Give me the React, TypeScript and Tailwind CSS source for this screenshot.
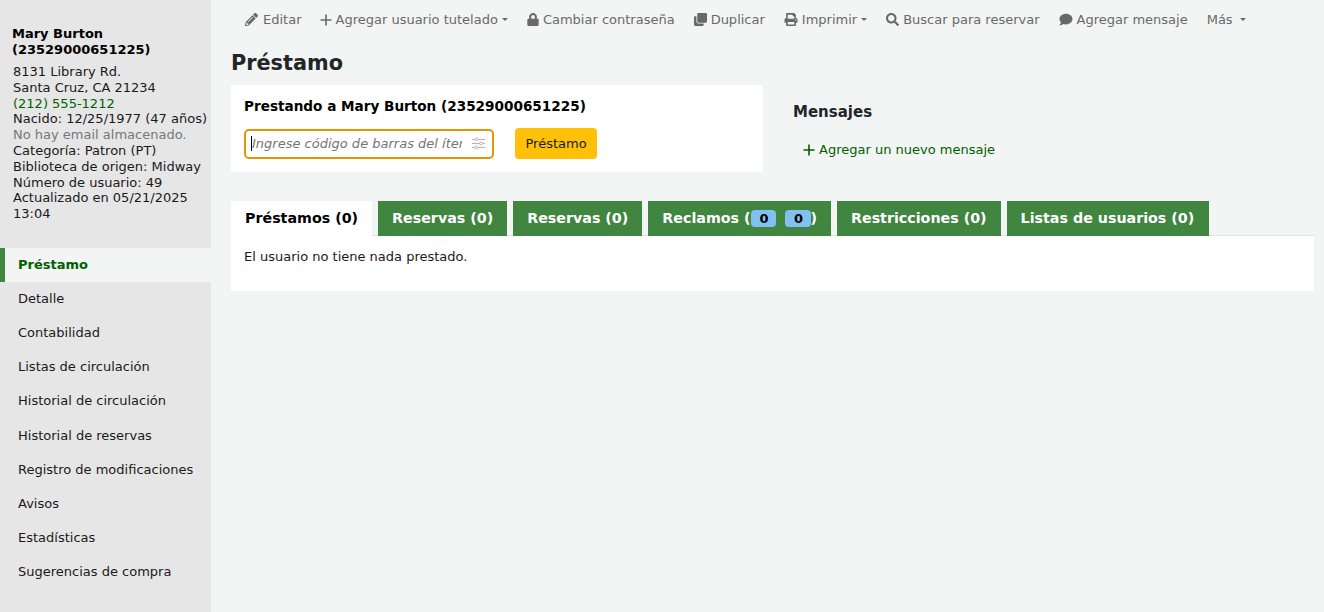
import { FaPencilAlt, FaLock, FaClone, FaPrint, FaSearch, FaComment } from "react-icons/fa";

const Caret = () => <span className="inline-block w-0 h-0 border-x-[3px] border-x-transparent border-t-[3px] border-t-[#696969] align-middle" />;

const ThinPlus = ({ color = "#696969" }: { color?: string }) => (
  <svg width="12" height="12" viewBox="0 0 12 12" fill="none" stroke={color} strokeWidth="1.6">
    <path d="M6 0.5V11.5M0.5 6H11.5" />
  </svg>
);

const toolbar = [
  { icon: <FaPencilAlt className="w-[13px] h-[13px]" />, label: "Editar", w: "ml-[245px]", gap: "gap-[5px]" },
  { icon: <ThinPlus />, label: "Agregar usuario tutelado", caret: true, w: "ml-[18px]", gap: "gap-[4px]" },
  { icon: <FaLock className="w-[12px] h-[13px]" />, label: "Cambiar contraseña", w: "ml-[19px]", gap: "gap-[4px]" },
  { icon: <FaClone className="w-[13px] h-[13px]" />, label: "Duplicar", w: "ml-[19px]", gap: "gap-[4px]" },
  { icon: <FaPrint className="w-[14px] h-[13px]" />, label: "Imprimir", caret: true, w: "ml-[19px]", gap: "gap-[4px]" },
  { icon: <FaSearch className="w-[13px] h-[13px]" />, label: "Buscar para reservar", w: "ml-[19px]", gap: "gap-[4px]" },
  { icon: <FaComment className="w-[14px] h-[13px]" />, label: "Agregar mensaje", w: "ml-[19px]", gap: "gap-[4px]" },
];

const nav = ["Detalle", "Contabilidad", "Listas de circulación", "Historial de circulación", "Historial de reservas", "Registro de modificaciones", "Avisos", "Estadísticas", "Sugerencias de compra"];

const Tab = ({ children, pr = "pr-[14px]" }: { children: React.ReactNode; pr?: string }) => (
  <div className={`ml-[6px] h-[35px] pl-[14px] ${pr} bg-[#408540] text-white font-bold text-[14.25px] flex items-center whitespace-nowrap`}>{children}</div>
);

export default function App() {
  return (
    <div className="flex min-h-[612px] bg-[#f3f4f4] text-[13px] text-[#000] font-['DejaVu_Sans',sans-serif]">
      <aside className="w-[211px] shrink-0 bg-[#e6e6e6] pt-[26px]">
        <div className="pl-[12px] font-bold leading-[16px]">Mary Burton<br />(23529000651225)</div>
        <div className="pl-[13px] pt-[6px] pb-[0.5px] leading-[15.8px] text-[#1a1a1a] whitespace-nowrap">
          <div>8131 Library Rd.</div>
          <div>Santa Cruz, CA 21234</div>
          <div className="text-[#006100]">(212) 555-1212</div>
          <div>Nacido: 12/25/1977 (47 años)</div>
          <div className="text-[#777]">No hay email almacenado.</div>
          <div>Categoría: Patron (PT)</div>
          <div>Biblioteca de origen: Midway</div>
          <div>Número de usuario: 49</div>
          <div>Actualizado en 05/21/2025</div>
          <div>13:04</div>
        </div>
        <nav className="mt-[26px]">
          <div className="h-[34px] pb-[2px] flex items-center pl-[13px] border-l-[5px] border-[#408540] bg-[#f3f4f4] text-[#006100] font-bold">Préstamo</div>
          {nav.map((n) => (
            <div key={n} className="h-[34.2px] pb-[2px] flex items-center pl-[18px] text-[#1a1a1a]">{n}</div>
          ))}
        </nav>
      </aside>
      <main className="flex-1 min-w-0 pr-[10px]">
        <div className="h-[39px] flex items-center text-[#696969] -ml-[211px] whitespace-nowrap">
          {toolbar.map((t) => (
            <div key={t.label} className={`${t.w} ${t.gap} flex items-center`}>
              {t.icon}
              <span>{t.label}</span>
              {t.caret && <Caret />}
            </div>
          ))}
          <div className="ml-[19px] flex items-center">Más<span className="ml-[7px] flex"><Caret /></span></div>
        </div>
        <div className="pl-[20px]">
          <h1 className="mt-[10px] h-[36px] text-[20.8px] leading-[28px] font-bold text-[#212529]">Préstamo</h1>
          <div className="flex">
            <section className="w-[532px] h-[87px] bg-white px-[13px] pt-[12px]">
              <h3 className="font-bold text-[13.6px] leading-[18px] text-black">Prestando a Mary Burton (23529000651225)</h3>
              <div className="mt-[13px] flex items-center">
                <div className="w-[250px] h-[30px] rounded-[5px] border-2 border-[#e69500] bg-white flex items-center pl-[5px] pr-[6px]">
                  <span className="w-px h-[15px] bg-black shrink-0" />
                  <input
                    readOnly
                    placeholder="Ingrese código de barras del ítem"
                    className="w-[210px] bg-transparent outline-none placeholder:italic placeholder:text-[#757575]"
                  />
                  <svg className="ml-[10px] shrink-0" width="13" height="13" viewBox="0 0 13 13" fill="none" stroke="#b5b5b5" strokeWidth="1">
                    <path d="M0 2.5H13M0 6.5H13M0 10.5H13" />
                    <circle cx="4.5" cy="2.5" r="1.5" fill="#fff" />
                    <circle cx="9" cy="6.5" r="1.5" fill="#fff" />
                    <circle cx="4.5" cy="10.5" r="1.5" fill="#fff" />
                  </svg>
                </div>
                <div className="ml-[21px] h-[31px] px-[10.5px] rounded-[4px] bg-[#ffc107] text-[#1a1a1a] flex items-center">Préstamo</div>
              </div>
            </section>
            <section className="ml-[30px] pt-[18px]">
              <h4 className="font-bold text-[15px] leading-[18px] text-[#212529]">Mensajes</h4>
              <div className="mt-[19px] pl-[10px] flex items-center gap-[4px] text-[#006100]">
                <ThinPlus color="#006100" />
                <span>Agregar un nuevo mensaje</span>
              </div>
            </section>
          </div>
          <div className="mt-[29px] h-[35px] flex items-start border-b border-[#dee2e6]">
            <div className="h-[35px] px-[14px] bg-white text-black font-bold text-[14.25px] flex items-center whitespace-nowrap">Préstamos (0)</div>
            <Tab>Reservas (0)</Tab>
            <Tab>Reservas (0)</Tab>
            <Tab>
              Reclamos (
              <span className="ml-[1px] w-[25px] h-[17px] rounded-[4px] bg-[#83c0f2] text-black text-[13px] flex items-center justify-center">0</span>
              <span className="ml-[9px] w-[26px] h-[17px] rounded-[4px] bg-[#83c0f2] text-black text-[13px] flex items-center justify-center">0</span>
              <span className="-ml-[1px]">)</span>
            </Tab>
            <Tab>Restricciones (0)</Tab>
            <Tab pr="pr-[15px]">Listas de usuarios (0)</Tab>
          </div>
          <div className="h-[55px] bg-white pl-[13px] pt-[13px] leading-[16px] text-[#1a1a1a]">El usuario no tiene nada prestado.</div>
        </div>
      </main>
    </div>
  );
}
